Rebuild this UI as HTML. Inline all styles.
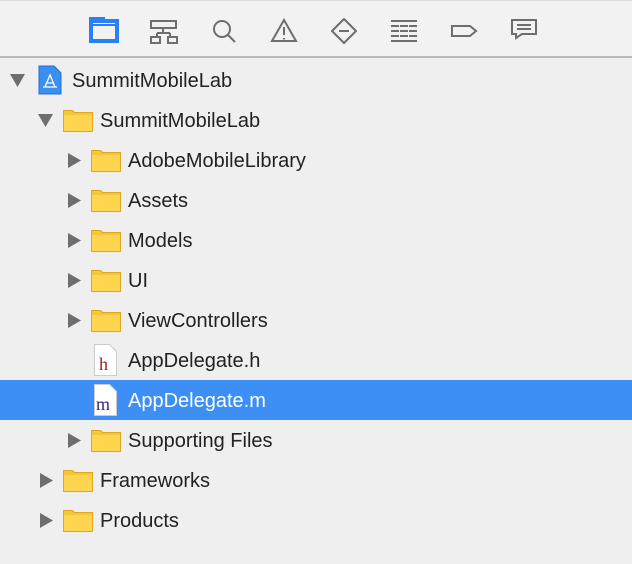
<html><head><style>
body{margin:0;width:632px;height:564px;background:#efefef;font-family:"Liberation Sans",sans-serif;overflow:hidden;position:relative}
.tb{position:absolute;left:0;top:0;width:632px;height:58px;background:#f2f2f2;border-top:1px solid #dcdcdc;border-bottom:2px solid #b9b9b9;box-sizing:border-box}
.row{position:absolute;left:0;width:632px;height:40px}
.sel{background:#3d8ff6}
.t{position:absolute;top:10px;font-size:20px;color:#222}
.sel .t{color:#fff}
.tri{position:absolute;top:13px}
.ic{position:absolute}
</style></head><body>
<div class="tb">
<svg width="632" height="56" style="position:absolute;left:0;top:0" fill="none" stroke="#6e6e6e" stroke-width="2">
<path d="M89 16h16v2h14v24H89z" fill="#2a7ff5" stroke="none"/><rect x="93" y="22" width="22" height="16" fill="#f2f2f2" stroke="none"/><rect x="93" y="23" width="22" height="2" fill="#2a7ff5" stroke="none"/>
<rect x="151" y="20" width="25" height="7"/><path d="M163 27v5M157 32h13M157 32v3M170 32v3"/><rect x="151" y="36" width="9" height="6"/><rect x="168" y="36" width="9" height="6"/>
<circle cx="222" cy="28" r="8"/><path d="M228 34l7 7"/>
<path d="M284 19l-12 21h24z"/><path d="M284 26v8M284 37v1.5"/>
<path d="M344 18l12 12-12 12-12-12z" stroke-linejoin="round"/><path d="M339 30h10"/>
<path d="M391 20h26M391 25h8M400 25h8M409 25h8M391 30h8M400 30h8M409 30h8M391 35h8M400 35h8M409 35h8M391 40h26"/>
<path d="M452 25h18l6 5-6 5h-18z"/>
<path d="M512 19h24v14h-14l-6 4v-4h-4z"/><path d="M517 24h14M517 28h14"/>
</svg>
</div>
<div class="row" style="top:60px"><svg class="tri" style="left:10px" width="15" height="14"><path d="M0 1h15L7.5 14z" fill="#6e6e6e"/></svg>
<svg class="ic" style="left:38px;top:5px" width="24" height="30"><path d="M1 1h15l7 7v21H1z" fill="#3a8ff0" stroke="#1f6fd0"/><path d="M7 22l5-12 5 12M8 18h8M5 22h14" stroke="#fff" stroke-width="1.3" fill="none"/></svg>
<span class="t" style="left:72px">SummitMobileLab</span></div>
<div class="row" style="top:100px"><svg class="tri" style="left:38px" width="15" height="14"><path d="M0 1h15L7.5 14z" fill="#6e6e6e"/></svg>
<svg class="ic" style="left:63px;top:8px" width="30" height="24"><path d="M0.5 2.5h9l2 2h18v19H.5z" fill="#f5c53a" stroke="#e0a820"/><path d="M1 7h28v16H1z" fill="#ffd54f"/></svg>
<span class="t" style="left:100px">SummitMobileLab</span></div>
<div class="row" style="top:140px"><svg class="tri" style="left:67px" width="14" height="15"><path d="M1 0v15l13-7.5z" fill="#6e6e6e"/></svg><svg class="ic" style="left:91px;top:8px" width="30" height="24"><path d="M0.5 2.5h9l2 2h18v19H.5z" fill="#f5c53a" stroke="#e0a820"/><path d="M1 7h28v16H1z" fill="#ffd54f"/></svg><span class="t" style="left:128px">AdobeMobileLibrary</span></div>
<div class="row" style="top:180px"><svg class="tri" style="left:67px" width="14" height="15"><path d="M1 0v15l13-7.5z" fill="#6e6e6e"/></svg><svg class="ic" style="left:91px;top:8px" width="30" height="24"><path d="M0.5 2.5h9l2 2h18v19H.5z" fill="#f5c53a" stroke="#e0a820"/><path d="M1 7h28v16H1z" fill="#ffd54f"/></svg><span class="t" style="left:128px">Assets</span></div>
<div class="row" style="top:220px"><svg class="tri" style="left:67px" width="14" height="15"><path d="M1 0v15l13-7.5z" fill="#6e6e6e"/></svg><svg class="ic" style="left:91px;top:8px" width="30" height="24"><path d="M0.5 2.5h9l2 2h18v19H.5z" fill="#f5c53a" stroke="#e0a820"/><path d="M1 7h28v16H1z" fill="#ffd54f"/></svg><span class="t" style="left:128px">Models</span></div>
<div class="row" style="top:260px"><svg class="tri" style="left:67px" width="14" height="15"><path d="M1 0v15l13-7.5z" fill="#6e6e6e"/></svg><svg class="ic" style="left:91px;top:8px" width="30" height="24"><path d="M0.5 2.5h9l2 2h18v19H.5z" fill="#f5c53a" stroke="#e0a820"/><path d="M1 7h28v16H1z" fill="#ffd54f"/></svg><span class="t" style="left:128px">UI</span></div>
<div class="row" style="top:300px"><svg class="tri" style="left:67px" width="14" height="15"><path d="M1 0v15l13-7.5z" fill="#6e6e6e"/></svg><svg class="ic" style="left:91px;top:8px" width="30" height="24"><path d="M0.5 2.5h9l2 2h18v19H.5z" fill="#f5c53a" stroke="#e0a820"/><path d="M1 7h28v16H1z" fill="#ffd54f"/></svg><span class="t" style="left:128px">ViewControllers</span></div>
<div class="row" style="top:340px"><svg class="ic" style="left:94px;top:4px" width="24" height="32"><path d="M.5 .5h15l7 7v24H.5z" fill="#fff" stroke="#ccc"/><text x="5" y="26" font-family="Liberation Serif,serif" font-size="18" fill="#9b1c2a">h</text></svg><span class="t" style="left:128px">AppDelegate.h</span></div>
<div class="row sel" style="top:380px"><svg class="ic" style="left:94px;top:4px" width="24" height="32"><path d="M.5 .5h15l7 7v24H.5z" fill="#fff" stroke="#ccc"/><text x="2" y="26" font-family="Liberation Serif,serif" font-size="18" fill="#3a1f7a">m</text></svg><span class="t" style="left:128px">AppDelegate.m</span></div>
<div class="row" style="top:420px"><svg class="tri" style="left:67px" width="14" height="15"><path d="M1 0v15l13-7.5z" fill="#6e6e6e"/></svg><svg class="ic" style="left:91px;top:8px" width="30" height="24"><path d="M0.5 2.5h9l2 2h18v19H.5z" fill="#f5c53a" stroke="#e0a820"/><path d="M1 7h28v16H1z" fill="#ffd54f"/></svg><span class="t" style="left:128px">Supporting Files</span></div>
<div class="row" style="top:460px"><svg class="tri" style="left:39px" width="14" height="15"><path d="M1 0v15l13-7.5z" fill="#6e6e6e"/></svg><svg class="ic" style="left:63px;top:8px" width="30" height="24"><path d="M0.5 2.5h9l2 2h18v19H.5z" fill="#f5c53a" stroke="#e0a820"/><path d="M1 7h28v16H1z" fill="#ffd54f"/></svg><span class="t" style="left:100px">Frameworks</span></div>
<div class="row" style="top:500px"><svg class="tri" style="left:39px" width="14" height="15"><path d="M1 0v15l13-7.5z" fill="#6e6e6e"/></svg><svg class="ic" style="left:63px;top:8px" width="30" height="24"><path d="M0.5 2.5h9l2 2h18v19H.5z" fill="#f5c53a" stroke="#e0a820"/><path d="M1 7h28v16H1z" fill="#ffd54f"/></svg><span class="t" style="left:100px">Products</span></div>
</body></html>
